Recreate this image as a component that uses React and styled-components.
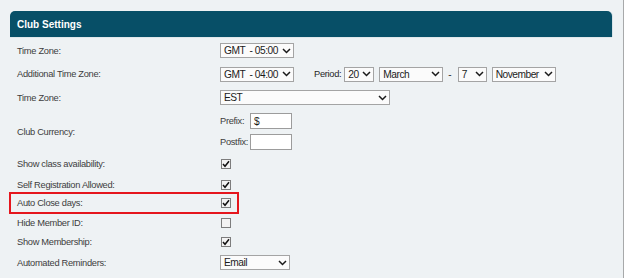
import React from "react";
import styled, { createGlobalStyle } from "styled-components";

const GlobalStyle = createGlobalStyle`
  html, body { margin: 0; padding: 0; }
  body {
    background: #eef2f4;
    font-family: "Liberation Sans", Arial, sans-serif;
  }
`;

const Page = styled.div`
  box-sizing: border-box;
  width: 624px;
  height: 278px;
  padding: 11px 11px 0 10px;
  border-right: 1px solid #a7a9aa;
  background: #eef2f4;
`;

const Header = styled.div`
  height: 26px;
  background: #074f67;
  border-radius: 5px 5px 0 0;
  color: #ffffff;
  font-size: 10px;
  font-weight: bold;
  display: flex;
  align-items: center;
  padding-left: 7px;
  box-shadow: 1px 0 0 #d7e3e8, 0 1px 0 #dfe7ea;
`;

const Form = styled.div`
  display: flex;
  flex-direction: column;
`;

const Row = styled.div`
  position: relative;
  display: flex;
  align-items: center;
  height: ${(p) => p.$h}px;
  padding-left: 7px;

  ${(p) =>
    p.$highlight &&
    `
    &::after {
      content: "";
      position: absolute;
      left: -1px;
      top: -1px;
      bottom: -1px;
      width: 230px;
      border: 2px solid #e5161d;
      box-sizing: border-box;
      pointer-events: none;
    }
  `}
`;

const Label = styled.div`
  width: 203px;
  flex: none;
  font-size: 9.3px;
  letter-spacing: -0.3px;
  color: #3d3d3d;
`;

const Field = styled.div`
  display: flex;
  align-items: center;
`;

const SelectBox = styled.div`
  box-sizing: border-box;
  width: ${(p) => p.$w}px;
  height: 15px;
  border: 1px solid #a4a4a4;
  background: #fbfbfb;
  display: flex;
  align-items: center;
  justify-content: space-between;
  padding: 0 2px 0 3px;
  font-size: 10.2px;
  letter-spacing: -0.5px;
  color: #1c1c1c;
  white-space: pre;
  margin-right: ${(p) => p.$mr || 0}px;
  flex: none;
`;

const Chevron = () => (
  <svg width="9" height="6" viewBox="0 0 9 6" style={{ flex: "none" }}>
    <path d="M1 1 L4.5 4.5 L8 1" fill="none" stroke="#1a1a1a" strokeWidth="1.5" />
  </svg>
);

const Select = ({ w, mr, children }) => (
  <SelectBox $w={w} $mr={mr}>
    <span>{children}</span>
    <Chevron />
  </SelectBox>
);

const SmallLabel = styled.span`
  font-size: 9.3px;
  letter-spacing: -0.3px;
  color: ${(p) => (p.$strong ? "#1f1f1f" : "#3d3d3d")};
  margin-right: ${(p) => p.$mr || 0}px;
  width: ${(p) => (p.$w ? p.$w + "px" : "auto")};
  flex: none;
`;

const Dash = styled.span`
  font-size: 10px;
  color: #333;
  margin: 0 6px 0 5px;
`;

const Stack = styled.div`
  display: flex;
  flex-direction: column;
  gap: 5px;
`;

const TextInput = styled.div`
  box-sizing: border-box;
  width: 42px;
  height: 16px;
  border: 1px solid #9c9c9c;
  background: #ffffff;
  font-size: 10.2px;
  color: #1c1c1c;
  padding-left: 3px;
  display: flex;
  align-items: center;
`;

const CheckBox = styled.div`
  box-sizing: border-box;
  width: 10px;
  height: 10px;
  margin-left: 1px;
  border: 1px solid #7d7d7d;
  background: #f3f3f3;
  display: flex;
  align-items: center;
  justify-content: center;
`;

const Check = ({ checked }) => (
  <CheckBox>
    {checked && (
      <svg width="8" height="8" viewBox="0 0 8 8">
        <path d="M1 4 L3 6.3 L7 1.2" fill="none" stroke="#111" strokeWidth="1.5" />
      </svg>
    )}
  </CheckBox>
);

export default function App() {
  return (
    <>
      <GlobalStyle />
      <Page>
        <Header>Club Settings</Header>
        <Form>
          <Row $h={27}>
            <Label>Time Zone:</Label>
            <Select w={74}>{"GMT  - 05:00"}</Select>
          </Row>
          <Row $h={20}>
            <Label>Additional Time Zone:</Label>
            <Field>
              <Select w={74} mr={20}>{"GMT  - 04:00"}</Select>
              <SmallLabel $strong $mr={3}>Period:</SmallLabel>
              <Select w={30} mr={5}>20</Select>
              <Select w={64}>March</Select>
              <Dash>-</Dash>
              <Select w={29} mr={5}>7</Select>
              <Select w={64}>November</Select>
            </Field>
          </Row>
          <Row $h={27}>
            <Label>Time Zone:</Label>
            <Select w={170}>EST</Select>
          </Row>
          <Row $h={41}>
            <Label>Club Currency:</Label>
            <Stack>
              <Field>
                <SmallLabel $w={30}>Prefix:</SmallLabel>
                <TextInput>$</TextInput>
              </Field>
              <Field>
                <SmallLabel $w={30}>Postfix:</SmallLabel>
                <TextInput />
              </Field>
            </Stack>
          </Row>
          <Row $h={24}>
            <Label>Show class availability:</Label>
            <Check checked />
          </Row>
          <Row $h={17}>
            <Label>Self Registration Allowed:</Label>
            <Check checked />
          </Row>
          <Row $h={20} $highlight>
            <Label>Auto Close days:</Label>
            <Check checked />
          </Row>
          <Row $h={19}>
            <Label>Hide Member ID:</Label>
            <Check />
          </Row>
          <Row $h={19}>
            <Label>Show Membership:</Label>
            <Check checked />
          </Row>
          <Row $h={23}>
            <Label>Automated Reminders:</Label>
            <Select w={70}>Email</Select>
          </Row>
        </Form>
      </Page>
    </>
  );
}
